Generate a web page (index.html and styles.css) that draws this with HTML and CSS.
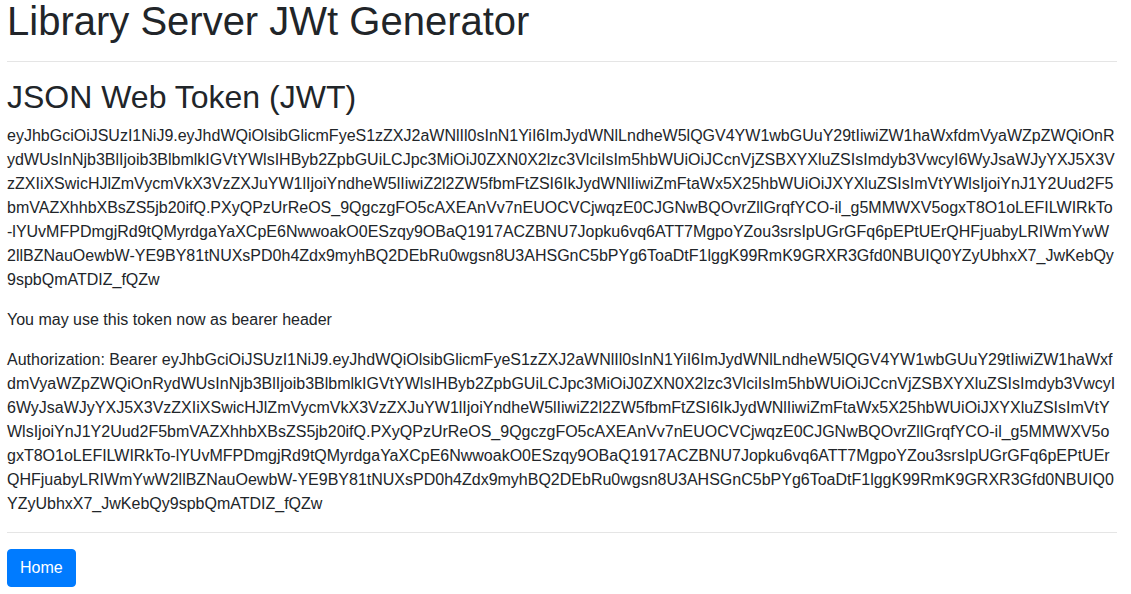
FILE: index.html
```html
<!DOCTYPE html>
<html lang="en">
<head>
<meta charset="utf-8">
<title>Library Server JWt Generator</title>
<link rel="stylesheet" href="styles.css">
</head>
<body>
<div class="page">
  <h1 class="title">Library Server JWt Generator</h1>
  <hr class="rule">
  <h2 class="subtitle">JSON Web Token (JWT)</h2>
  <p class="token">eyJhbGciOiJSUzI1NiJ9.eyJhdWQiOlsibGlicmFyeS1zZXJ2aWNlIl0sInN1YiI6ImJydWNlLndheW5lQGV4YW1wbGUuY29tIiwiZW1haWxfdmVyaWZpZWQiOnRydWUsInNjb3BlIjoib3BlbmlkIGVtYWlsIHByb2ZpbGUiLCJpc3MiOiJ0ZXN0X2lzc3VlciIsIm5hbWUiOiJCcnVjZSBXYXluZSIsImdyb3VwcyI6WyJsaWJyYXJ5X3VzZXIiXSwicHJlZmVycmVkX3VzZXJuYW1lIjoiYndheW5lIiwiZ2l2ZW5fbmFtZSI6IkJydWNlIiwiZmFtaWx5X25hbWUiOiJXYXluZSIsImVtYWlsIjoiYnJ1Y2Uud2F5bmVAZXhhbXBsZS5jb20ifQ.PXyQPzUrReOS_9QgczgFO5cAXEAnVv7nEUOCVCjwqzE0CJGNwBQOvrZllGrqfYCO-il_g5MMWXV5ogxT8O1oLEFILWIRkTo-lYUvMFPDmgjRd9tQMyrdgaYaXCpE6NwwoakO0ESzqy9OBaQ1917ACZBNU7Jopku6vq6ATT7MgpoYZou3srsIpUGrGFq6pEPtUErQHFjuabyLRIWmYwW2llBZNauOewbW-YE9BY81tNUXsPD0h4Zdx9myhBQ2DEbRu0wgsn8U3AHSGnC5bPYg6ToaDtF1lggK99RmK9GRXR3Gfd0NBUIQ0YZyUbhxX7_JwKebQy9spbQmATDIZ_fQZw</p>
  <p class="text">You may use this token now as bearer header</p>
  <p class="token">Authorization: Bearer eyJhbGciOiJSUzI1NiJ9.eyJhdWQiOlsibGlicmFyeS1zZXJ2aWNlIl0sInN1YiI6ImJydWNlLndheW5lQGV4YW1wbGUuY29tIiwiZW1haWxfdmVyaWZpZWQiOnRydWUsInNjb3BlIjoib3BlbmlkIGVtYWlsIHByb2ZpbGUiLCJpc3MiOiJ0ZXN0X2lzc3VlciIsIm5hbWUiOiJCcnVjZSBXYXluZSIsImdyb3VwcyI6WyJsaWJyYXJ5X3VzZXIiXSwicHJlZmVycmVkX3VzZXJuYW1lIjoiYndheW5lIiwiZ2l2ZW5fbmFtZSI6IkJydWNlIiwiZmFtaWx5X25hbWUiOiJXYXluZSIsImVtYWlsIjoiYnJ1Y2Uud2F5bmVAZXhhbXBsZS5jb20ifQ.PXyQPzUrReOS_9QgczgFO5cAXEAnVv7nEUOCVCjwqzE0CJGNwBQOvrZllGrqfYCO-il_g5MMWXV5ogxT8O1oLEFILWIRkTo-lYUvMFPDmgjRd9tQMyrdgaYaXCpE6NwwoakO0ESzqy9OBaQ1917ACZBNU7Jopku6vq6ATT7MgpoYZou3srsIpUGrGFq6pEPtUErQHFjuabyLRIWmYwW2llBZNauOewbW-YE9BY81tNUXsPD0h4Zdx9myhBQ2DEbRu0wgsn8U3AHSGnC5bPYg6ToaDtF1lggK99RmK9GRXR3Gfd0NBUIQ0YZyUbhxX7_JwKebQy9spbQmATDIZ_fQZw</p>
  <hr class="rule">
  <a class="btn-home" href="#">Home</a>
</div>
</body>
</html>
```

FILE: styles.css
```css
html, body {
  margin: 0;
  padding: 0;
  background: #fff;
}

body {
  font-family: "Liberation Sans", Arial, sans-serif;
  font-size: 16px;
  line-height: 1.5;
  color: #212529;
}

.page {
  width: 1110px;
  padding: 0 0 0 7px;
  display: flex;
  flex-direction: column;
  align-items: flex-start;
}

.title {
  margin: -3px 0 0;
  font-size: 40px;
  font-weight: 500;
  line-height: 1.2;
  align-self: stretch;
}

.rule {
  align-self: stretch;
  margin: 16px 0;
  border: 0;
  border-top: 1px solid rgba(0, 0, 0, 0.1);
  height: 0;
}

.subtitle {
  margin: 0 0 8px;
  font-size: 32px;
  font-weight: 500;
  line-height: 1.2;
}

.token,
.text {
  margin: 0 0 16px;
  align-self: stretch;
}

.token {
  word-break: break-all;
}

.token + .rule {
  margin-top: 0;
}

.btn-home {
  display: inline-block;
  padding: 6px 12px;
  font-size: 16px;
  line-height: 24px;
  color: #fff;
  background: #007bff;
  border: 1px solid #007bff;
  border-radius: 4px;
  text-decoration: none;
}
```
